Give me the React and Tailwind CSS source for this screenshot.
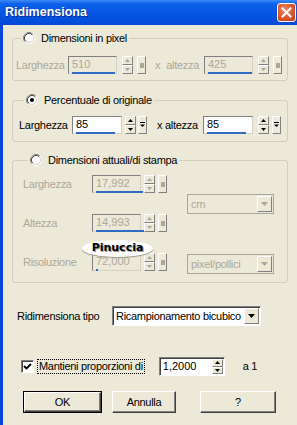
const raised =
  "bg-[#ece9d8] border border-t-white border-l-white border-r-[#808080] border-b-[#808080]";

const Radio = ({ checked }) => (
  <svg width="12" height="12" viewBox="0 0 12 12" className="shrink-0">
    <circle cx="6" cy="6" r="5" fill="#fff" />
    <path d="M2.11 9.89A5.5 5.5 0 0 1 9.89 2.11" stroke="#808080" fill="none" />
    <path d="M2.82 9.18A4.5 4.5 0 0 1 9.18 2.82" stroke="#404040" fill="none" />
    <path d="M9.89 2.11A5.5 5.5 0 0 1 2.11 9.89" stroke="#fff" fill="none" />
    <path d="M9.18 2.82A4.5 4.5 0 0 1 2.82 9.18" stroke="#d4d0c8" fill="none" />
    {checked && <circle cx="6" cy="6" r="2" fill="#000" />}
  </svg>
);

const Arrow = ({ up, color, size = 5 }) => (
  <svg width={size} height={Math.ceil(size / 2)} viewBox={`0 0 ${size} ${Math.ceil(size / 2)}`}>
    <path
      d={up ? `M0 ${Math.ceil(size / 2)}H${size}L${size / 2} 0Z` : `M0 0H${size}L${size / 2} ${Math.ceil(size / 2)}Z`}
      fill={color}
    />
  </svg>
);

const SpinEdit = ({ value, disabled, editW, bar, gap1 = "ml-[4px]", gap2 = "ml-[3px]" }) => {
  const c = disabled ? "#aca899" : "#000";
  return (
    <div className="flex items-stretch h-[18px]">
      <div
        className={`relative ${editW} border border-t-[#808080] border-l-[#808080] border-r-[#d4d0c8] border-b-[#d4d0c8] ${
          disabled ? "bg-[#ece9d8] text-[#aca899]" : "bg-white text-black"
        }`}
      >
        <span className="block pl-[3px] leading-[15px] tracking-normal">{value}</span>
        <div
          className="absolute left-[3px] bottom-[-1px] h-[2px] bg-[#316ac5]"
          style={{ width: bar }}
        />
      </div>
      <div className={`${gap1} flex flex-col w-[11px]`}>
        <div className={`${raised} flex-1 flex items-center justify-center`}>
          <Arrow up color={c} />
        </div>
        <div className={`${raised} flex-1 flex items-center justify-center`}>
          <Arrow color={c} />
        </div>
      </div>
      <div className={`${gap2} ${raised} w-[9px] flex flex-col items-center justify-center`}>
        {disabled ? (
          <div className="w-[4px] h-[5px] bg-[#aca899]" />
        ) : (
          <svg width="5" height="6" viewBox="0 0 5 6">
            <path d="M0 0.5H5" stroke="#000" />
            <path d="M0 2.5H5L2.5 5Z" fill="#000" />
          </svg>
        )}
      </div>
    </div>
  );
};

const Combo = ({ value, disabled, w }) => (
  <div
    className={`flex h-[20px] ${w} border ${
      disabled
        ? "border-[#a8a699] bg-[#ece9d8] text-[#aca899]"
        : "border-t-[#808080] border-l-[#808080] border-r-white border-b-white bg-white text-black shadow-[inset_1px_1px_0_#404040]"
    }`}
  >
    <span className="flex-1 pl-[3px] pt-[1px] leading-[16px] whitespace-nowrap overflow-hidden">{value}</span>
    <div className={`${raised} w-[15px] my-[1px] mr-[1px] flex items-center justify-center`}>
      <Arrow color={disabled ? "#aca899" : "#000"} size={7} />
    </div>
  </div>
);

const Group = ({ label, checked, children, className = "" }) => (
  <fieldset className={`border border-[#d0d0bf] rounded-[3px] ${className}`}>
    <legend className="ml-[5px] px-[2px] flex items-center gap-[6px] h-[14px] text-black">
      <Radio checked={checked} />
      <span>{label}</span>
    </legend>
    {children}
  </fieldset>
);

const Btn = ({ children, w, def }) => (
  <div
    className={`h-[22px] ${w} flex items-center justify-center text-black ${
      def ? "border border-black" : ""
    }`}
  >
    <div className="w-full h-full flex items-center justify-center bg-[#ece9d8] border border-t-white border-l-white border-r-[#404040] border-b-[#404040] shadow-[inset_-1px_-1px_0_#808080]">
      {children}
    </div>
  </div>
);

export default function App() {
  return (
    <div className="w-[297px] h-[425px] overflow-hidden bg-[#ece9d8] flex flex-col font-['Liberation_Sans',Arial,sans-serif] text-[11px] tracking-[-0.3px] text-black">
      <div className="h-[25px] shrink-0 flex items-center justify-between pl-[5px] pr-[1px] bg-[linear-gradient(180deg,#3d8af7_0%,#0b5fe8_16%,#0555e2_55%,#0449d8_100%)]">
        <span className="text-white font-bold text-[12.5px] tracking-normal [text-shadow:1px_1px_0_#0a2a8a]">
          Ridimensiona
        </span>
        <div className="w-[19px] h-[19px] rounded-[3px] border border-white bg-[radial-gradient(circle_at_40%_35%,#f08a62,#d9522b_60%,#c0401c)] flex items-center justify-center">
          <svg width="11" height="11" viewBox="0 0 11 11">
            <path d="M1.5 1.5L9.5 9.5M9.5 1.5L1.5 9.5" stroke="#fff" strokeWidth="2" strokeLinecap="square" />
          </svg>
        </div>
      </div>

      <div className="flex-1 flex flex-col border-l-[3px] border-[#0a46dc] pl-[9px] pr-[9px] pt-[6px]">
        <Group label="Dimensioni in pixel" className="pl-[3px] pt-[11px] pb-[6px]">
          <div className="flex items-center text-[#aca899]">
            <span className="w-[52px]">Larghezza</span>
            <SpinEdit value="510" disabled editW="w-[49px]" bar="43px" gap1="ml-[5px]" gap2="ml-[4px]" />
            <span className="w-[58px] pl-[9px] whitespace-nowrap">
              x<span className="ml-[6px]">altezza</span>
            </span>
            <SpinEdit value="425" disabled editW="w-[49px]" bar="44px" gap1="ml-[5px]" gap2="ml-[4px]" />
          </div>
        </Group>

        <Group label="Percentuale di originale" checked className="mt-[12px] pl-[6px] pt-[9px] pb-[7px]">
          <div className="flex items-center">
            <span className="w-[53px]">Larghezza</span>
            <SpinEdit value="85" editW="w-[50px]" bar="39px" gap1="ml-[3px]" gap2="ml-[2px]" />
            <span className="w-[56px] pl-[10px] whitespace-nowrap">x altezza</span>
            <SpinEdit value="85" editW="w-[50px]" bar="39px" gap1="ml-[5px]" gap2="ml-[3px]" />
          </div>
        </Group>

        <Group label="Dimensioni attuali/di stampa" className="mt-[11px] pl-[10px] pt-[8px] pb-[8px]">
          <div className="flex text-[#aca899]">
            <div className="flex flex-col gap-[21px]">
              <div className="flex items-center">
                <span className="w-[69px]">Larghezza</span>
                <SpinEdit value="17,992" disabled editW="w-[49px]" bar="47px" gap1="ml-[3px]" gap2="ml-[3px]" />
              </div>
              <div className="flex items-center">
                <span className="w-[69px]">Altezza</span>
                <SpinEdit value="14,993" disabled editW="w-[49px]" bar="48px" gap1="ml-[3px]" gap2="ml-[3px]" />
              </div>
              <div className="relative flex items-center">
                <span className="w-[69px]">Risoluzione</span>
                <SpinEdit value="72,000" disabled editW="w-[49px]" bar="2px" gap1="ml-[3px]" gap2="ml-[3px]" />
                <div className="absolute left-[59px] top-[-13px] w-[71px] h-[17px] rounded-[50%] bg-white shadow-[0_1px_1px_#9c9a8c] flex items-center justify-center">
                  <span className="font-['DejaVu_Sans',sans-serif] font-bold text-[11px] tracking-normal text-black [text-shadow:1px_1px_0_#9a9a9a]">
                    Pinuccia
                  </span>
                </div>
              </div>
            </div>
            <div className="ml-[20px] flex flex-col pt-[19px] gap-[40px]">
              <Combo value="cm" disabled w="w-[87px]" />
              <Combo value="pixel/pollici" disabled w="w-[87px]" />
            </div>
          </div>
        </Group>

        <div className="mt-[23px] pl-[5px] flex items-center">
          <span className="w-[95px]">Ridimensiona tipo</span>
          <Combo value="Ricampionamento bicubico" w="w-[149px]" />
        </div>

        <div className="mt-[31px] pl-[9px] flex items-center h-[19px]">
          <div className="w-[13px] h-[13px] bg-white border border-t-[#808080] border-l-[#808080] border-r-white border-b-white shadow-[inset_1px_1px_0_#404040] flex items-center justify-center">
            <svg width="9" height="9" viewBox="0 0 9 9">
              <path d="M1 4L3.5 6.5L8 2" stroke="#000" strokeWidth="1.8" fill="none" />
            </svg>
          </div>
          <span className="ml-[3px] px-[1px] whitespace-nowrap border border-dotted border-black leading-[13px]">
            Mantieni proporzioni di
          </span>
          <div className="ml-[14px] w-[66px] h-[19px] flex bg-white border border-t-[#808080] border-l-[#808080] border-r-white border-b-white shadow-[inset_1px_1px_0_#404040]">
            <span className="flex-1 pl-[3px] leading-[17px] tracking-normal">1,2000</span>
            <div className="flex flex-col w-[11px] my-[1px] mr-[1px]">
              <div className={`${raised} flex-1 flex items-center justify-center`}>
                <Arrow up color="#000" />
              </div>
              <div className={`${raised} flex-1 flex items-center justify-center`}>
                <Arrow color="#000" />
              </div>
            </div>
          </div>
          <span className="ml-[18px]">a 1</span>
        </div>

        <div className="mt-[15px] pl-[11px] flex">
          <Btn w="w-[79px]" def>OK</Btn>
          <div className="ml-[10px]">
            <Btn w="w-[64px]">Annulla</Btn>
          </div>
          <div className="ml-[24px]">
            <Btn w="w-[76px]">?</Btn>
          </div>
        </div>
      </div>
    </div>
  );
}
